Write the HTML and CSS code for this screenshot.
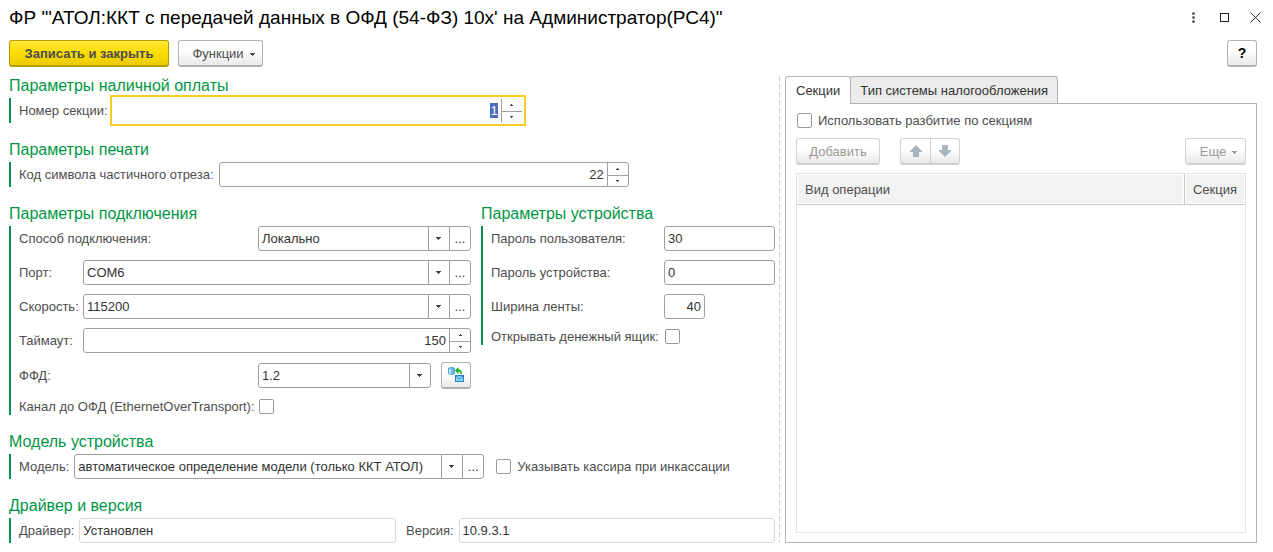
FILE: index.html
```html
<!DOCTYPE html>
<html lang="ru">
<head>
<meta charset="utf-8">
<title>ФР АТОЛ:ККТ</title>
<link rel="stylesheet" href="styles.css">
</head>
<body>
<svg class="defs" aria-hidden="true">
  <symbol id="down" viewBox="0 0 5 3"><path d="M0 0h5v1h-1v1h-1v1h-1v-1h-1v-1h-1z"/></symbol>
  <symbol id="up-s" viewBox="0 0 3 2"><path d="M1 0h1v1h1v1h-3v-1h1z"/></symbol>
  <symbol id="down-s" viewBox="0 0 3 2"><path d="M0 0h3v1h-1v1h-1v-1h-1z"/></symbol>
</svg>

<header class="titlebar">
  <h1 class="title">ФР "'АТОЛ:ККТ с передачей данных в ОФД (54-ФЗ) 10x' на Администратор(РС4)"</h1>
  <div class="window-actions">
    <button class="icon-button" aria-label="Меню"><svg width="13" height="13" viewBox="0 0 13 13"><g fill="#666"><circle cx="6.5" cy="2.5" r="1.5"/><circle cx="6.5" cy="6.5" r="1.5"/><circle cx="6.5" cy="10.5" r="1.5"/></g></svg></button>
    <button class="icon-button" aria-label="Развернуть"><svg width="13" height="13" viewBox="0 0 13 13"><rect x="2.5" y="2.5" width="8" height="8" fill="none" stroke="#222"/></svg></button>
    <button class="icon-button" aria-label="Закрыть"><svg width="13" height="13" viewBox="0 0 13 13"><path d="M1.5 1.5l10 10M11.5 1.5l-10 10" stroke="#333" fill="none"/></svg></button>
  </div>
</header>

<div class="toolbar">
  <button class="button button-primary">Записать и закрыть</button>
  <button class="button button-menu">Функции <svg class="arrow"><use href="#down"/></svg></button>
  <button class="button button-help">?</button>
</div>

<main class="workspace">
  <form class="form">
    <section class="group">
      <h2 class="group-title">Параметры наличной оплаты</h2>
      <div class="group-body">
        <div class="row">
          <label class="label" for="section">Номер секции:</label>
          <div class="field field-wide field-focused">
            <input class="input number" id="section" value="1">
            <div class="spin">
              <button type="button" class="spin-button" aria-label="Больше"><svg class="arrow-small"><use href="#up-s"/></svg></button>
              <button type="button" class="spin-button" aria-label="Меньше"><svg class="arrow-small"><use href="#down-s"/></svg></button>
            </div>
          </div>
        </div>
      </div>
    </section>

    <section class="group">
      <h2 class="group-title">Параметры печати</h2>
      <div class="group-body">
        <div class="row">
          <label class="label" for="cut">Код символа частичного отреза:</label>
          <div class="field field-wide">
            <input class="input number" id="cut" value="22">
            <div class="spin">
              <button type="button" class="spin-button" aria-label="Больше"><svg class="arrow-small"><use href="#up-s"/></svg></button>
              <button type="button" class="spin-button" aria-label="Меньше"><svg class="arrow-small"><use href="#down-s"/></svg></button>
            </div>
          </div>
        </div>
      </div>
    </section>

    <div class="pair">
      <section class="group">
        <h2 class="group-title">Параметры подключения</h2>
        <div class="group-body">
          <div class="row row-split">
            <label class="label" for="method">Способ подключения:</label>
            <div class="field">
              <div class="choice"><select class="select" id="method"><option>Локально</option></select><svg class="arrow"><use href="#down"/></svg></div>
              <button type="button" class="more" aria-label="Выбрать способ">...</button>
            </div>
          </div>
          <div class="row row-narrow">
            <label class="label" for="port">Порт:</label>
            <div class="field">
              <div class="choice"><select class="select" id="port"><option>COM6</option></select><svg class="arrow"><use href="#down"/></svg></div>
              <button type="button" class="more" aria-label="Выбрать порт">...</button>
            </div>
          </div>
          <div class="row row-narrow">
            <label class="label" for="speed">Скорость:</label>
            <div class="field">
              <div class="choice"><select class="select" id="speed"><option>115200</option></select><svg class="arrow"><use href="#down"/></svg></div>
              <button type="button" class="more" aria-label="Выбрать скорость">...</button>
            </div>
          </div>
          <div class="row row-narrow">
            <label class="label" for="timeout">Таймаут:</label>
            <div class="field">
              <input class="input number" id="timeout" value="150">
              <div class="spin">
                <button type="button" class="spin-button" aria-label="Больше"><svg class="arrow-small"><use href="#up-s"/></svg></button>
                <button type="button" class="spin-button" aria-label="Меньше"><svg class="arrow-small"><use href="#down-s"/></svg></button>
              </div>
            </div>
          </div>
          <div class="row row-split">
            <label class="label" for="ffd">ФФД:</label>
            <div class="field-set">
              <div class="field">
                <div class="choice"><select class="select" id="ffd"><option>1.2</option></select><svg class="arrow"><use href="#down"/></svg></div>
              </div>
              <button type="button" class="button button-icon" aria-label="Получить версию">
                <svg width="18" height="18" viewBox="0 0 18 18">
                  <path d="M1.500 2.500c0-1.300 6-1.300 6 0v5c0 1.300-6 1.300-6 0z" fill="#6bb8ec" stroke="#4a9fd6"/>
                  <path d="M2 3h2v5h-2z" fill="#c4e6fb"/>
                  <path d="M8 4.500l3.500-3.500v2.500c2.500 0 3.500 1.500 3.500 4.500h-1.500c0-2-.5-2.500-2-2.500v2.500z" fill="#12b012"/>
                  <rect x="8.500" y="9.500" width="8" height="6" fill="#8ed0fa" stroke="#2585c9"/>
                  <path d="M9 10l3.500 3 3.500-3" fill="none" stroke="#2585c9"/>
                </svg>
              </button>
            </div>
          </div>
          <div class="row row-split row-check">
            <label class="label" for="channel">Канал до ОФД (EthernetOverTransport):</label>
            <input type="checkbox" class="check" id="channel">
          </div>
        </div>
      </section>

      <section class="group">
        <h2 class="group-title">Параметры устройства</h2>
        <div class="group-body">
          <div class="row row-device">
            <label class="label" for="user-pass">Пароль пользователя:</label>
            <div class="field"><input class="input" id="user-pass" value="30"></div>
          </div>
          <div class="row row-device">
            <label class="label" for="dev-pass">Пароль устройства:</label>
            <div class="field"><input class="input" id="dev-pass" value="0"></div>
          </div>
          <div class="row row-device">
            <label class="label" for="tape">Ширина ленты:</label>
            <div class="field field-short"><input class="input number" id="tape" value="40"></div>
          </div>
          <div class="row row-device row-check">
            <label class="label" for="drawer">Открывать денежный ящик:</label>
            <input type="checkbox" class="check" id="drawer">
          </div>
        </div>
      </section>
    </div>

    <section class="group">
      <h2 class="group-title">Модель устройства</h2>
      <div class="group-body">
        <div class="row">
          <label class="label" for="model">Модель:</label>
          <div class="field field-wide">
            <div class="choice"><select class="select" id="model"><option>автоматическое определение модели (только ККТ АТОЛ)</option></select><svg class="arrow"><use href="#down"/></svg></div>
            <button type="button" class="more" aria-label="Выбрать модель">...</button>
          </div>
          <label class="check-label check-after"><input type="checkbox" class="check">Указывать кассира при инкассации</label>
        </div>
      </div>
    </section>

    <section class="group">
      <h2 class="group-title">Драйвер и версия</h2>
      <div class="group-body">
        <div class="row row-driver">
          <div class="row">
            <label class="label" for="driver">Драйвер:</label>
            <div class="field field-readonly"><input class="input" id="driver" value="Установлен" readonly></div>
          </div>
          <div class="row">
            <label class="label" for="version">Версия:</label>
            <div class="field field-readonly"><input class="input" id="version" value="10.9.3.1" readonly></div>
          </div>
        </div>
      </div>
    </section>
  </form>

  <div class="splitter"></div>

  <section class="panel">
    <div class="tabs" role="tablist">
      <button class="tab tab-active" role="tab" aria-selected="true">Секции</button>
      <button class="tab" role="tab" aria-selected="false">Тип системы налогообложения</button>
    </div>
    <div class="panel-body">
      <label class="check-label"><input type="checkbox" class="check">Использовать разбитие по секциям</label>
      <div class="commands">
        <button class="button button-add" disabled>Добавить</button>
        <div class="button-pair">
          <button class="button button-icon" disabled aria-label="Вверх"><svg width="12" height="12" viewBox="0 0 12 12"><path d="M6 0l6 6v1h-3v5h-6v-5h-3v-1z" fill="#a9b5bd"/></svg></button>
          <button class="button button-icon" disabled aria-label="Вниз"><svg width="12" height="12" viewBox="0 0 12 12"><path d="M6 12l6-6v-1h-3v-5h-6v5h-3v1z" fill="#a9b5bd"/></svg></button>
        </div>
        <button class="button button-more" disabled>Еще <svg class="arrow"><use href="#down"/></svg></button>
      </div>
      <div class="table-box">
        <table class="table">
          <thead><tr><th>Вид операции</th><th class="col-section">Секция</th></tr></thead>
          <tbody></tbody>
        </table>
      </div>
    </div>
  </section>
</main>
<script src="app.js"></script>
</body>
</html>
```
FILE: app.js
```js
const section = document.getElementById("section");
section.focus();
section.select();
```
FILE: styles.css
```css
* { box-sizing: border-box; }

body {
  margin: 0;
  background: #fff;
  color: #4d4d4d;
  font: 13px/15px "Liberation Sans", Arial, sans-serif;
}

button, input, select {
  margin: 0;
  font: inherit;
  color: inherit;
}

svg { display: block; flex: none; }
.defs { position: absolute; width: 0; height: 0; }
.arrow { width: 5px; height: 3px; fill: #444; }
.arrow-small { width: 3px; height: 2px; fill: #444; }

.titlebar {
  display: flex;
  align-items: center;
  justify-content: space-between;
  height: 35px;
  padding: 0 11px 0 9px;
}
.title {
  margin: 0;
  font-size: 19px;
  line-height: 21px;
  font-weight: normal;
  color: #000;
}
.window-actions { display: flex; gap: 18px; }
.icon-button {
  padding: 0;
  border: 0;
  background: none;
}

.toolbar {
  display: flex;
  gap: 9px;
  padding: 5px 16px 7px 9px;
}

.button {
  display: flex;
  align-items: center;
  justify-content: center;
  height: 27px;
  padding: 0 13px;
  border: 1px solid #b3b3b3;
  border-bottom: 2px solid #b0b0b0;
  border-radius: 3px;
  background: linear-gradient(#fff 40%, #e9e9e9);
  white-space: nowrap;
}
.button:disabled { color: #999; border-color: #d0d0d0; }
.button .arrow { margin-top: 2px; }
.button:disabled .arrow { fill: #999; }
.button-primary {
  width: 160px;
  padding: 0;
  font-weight: bold;
  border-color: #b39b00;
  background: linear-gradient(#ffe835, #fbdc00 50%, #eccb00);
}
.button-menu { width: 85px; gap: 6px; padding: 0 6px 0 12px; }
.button-help {
  width: 30px;
  margin-left: auto;
  padding: 0;
  color: #000;
  font-size: 14px;
  font-weight: bold;
}
.button-icon { width: 30px; padding: 0; }
.button-add { width: 84px; padding: 0; }
.button-more { width: 61px; gap: 6px; padding: 0 6px 0 12px; margin-left: auto; }

.workspace {
  display: grid;
  grid-template-columns: minmax(0, 766fr) 10px minmax(0, 472fr);
  padding: 0 16px 9px 9px;
}
.form {
  display: flex;
  flex-direction: column;
  gap: 15px;
}
.splitter {
  margin: 2px 0 0 4px;
  width: 1px;
  background: repeating-linear-gradient(#d0d0d0 0 5px, #fff 5px 8px);
}

.group-title {
  margin: 0;
  font-size: 16px;
  line-height: 24px;
  font-weight: normal;
  color: #009646;
}
.group-body {
  display: flex;
  flex-direction: column;
  gap: 9px;
  padding-left: 8px;
  border-left: 2px solid #009646;
}
.pair {
  display: grid;
  grid-template-columns: 462fr 294fr;
  align-items: start;
  gap: 10px;
}

.row {
  display: flex;
  align-items: center;
  gap: 5px;
  min-width: 0;
}
.row-split, .row-narrow, .row-device, .row-driver { display: grid; gap: 0; }
.row-split { grid-template-columns: 239px 1fr; }
.row-narrow { grid-template-columns: 64px 1fr; }
.row-device { grid-template-columns: 173px 1fr; }
.row-driver { grid-template-columns: 377fr 369fr; gap: 10px; }
.row-check { height: 17px; }
.label { white-space: nowrap; }

.field {
  display: flex;
  flex: 1;
  min-width: 0;
  height: 25px;
  border: 1px solid #a0a0a0;
  border-radius: 3px;
  background: #fff;
  color: #333;
  overflow: hidden;
}
.field-wide { flex: 0 1 410px; }
.field-short { width: 41px; }
.field-readonly { border-color: #d9d9d9; }
.field-focused {
  flex-basis: 416px;
  height: 31px;
  margin: -3px;
  padding: 2px;
  border: 2px solid #fc2;
  border-radius: 0;
}
.field-set { display: flex; align-items: center; gap: 10px; }

.input {
  flex: 1;
  width: 0;
  min-width: 0;
  padding: 0 3px;
  border: 0;
  outline: 0;
  background: none;
}
.input::selection { background: #4c6cc0; color: #fff; }
.number { text-align: right; }

.choice { display: grid; flex: 1; min-width: 0; }
.choice > * { grid-area: 1 / 1; }
.choice .arrow {
  justify-self: end;
  align-self: center;
  width: 21px;
  height: 23px;
  padding: 10px 8px 10px 7px;
  border-left: 1px solid #a0a0a0;
  pointer-events: none;
}
.select {
  width: 100%;
  min-width: 0;
  padding: 0 22px 0 3px;
  border: 0;
  outline: 0;
  appearance: none;
  background: none;
}
.more {
  width: 21px;
  padding: 0;
  border: 0;
  border-left: 1px solid #a0a0a0;
  background: none;
}
.spin {
  display: grid;
  grid-template-rows: 1fr 1fr;
  width: 21px;
  border-left: 1px solid #a0a0a0;
}
.spin-button {
  display: grid;
  place-items: center;
  padding: 0;
  border: 0;
  background: none;
}
.spin-button + .spin-button { border-top: 1px solid #a0a0a0; }

.check {
  appearance: none;
  flex: none;
  width: 15px;
  height: 15px;
  margin: 0 1px;
  border: 1px solid #999;
  border-radius: 2px;
  background: #fff;
}
.check:checked { background: #009646; }
.check-label {
  display: flex;
  align-items: center;
  gap: 5px;
  height: 17px;
  white-space: nowrap;
}
.check-after { margin-left: 6px; }

.panel {
  display: flex;
  flex-direction: column;
  min-width: 0;
  padding-top: 2px;
}
.tabs { display: flex; }
.tab {
  height: 27px;
  padding: 0 9px;
  border: 1px solid #b3b3b3;
  border-bottom: 0;
  border-radius: 3px 3px 0 0;
  background: #ebebeb;
  color: #333;
  white-space: nowrap;
}
.tab + .tab { margin-left: -1px; }
.tab-active {
  z-index: 1;
  height: 28px;
  margin-bottom: -1px;
  padding: 0 10px;
  background: #fff;
}
.panel-body {
  display: flex;
  flex: 1;
  flex-direction: column;
  padding: 8px 10px 9px;
  border: 1px solid #b3b3b3;
}
.commands {
  display: flex;
  gap: 20px;
  margin: 9px 0 8px;
}
.button-pair { display: flex; }
.button-pair .button:first-child { width: 31px; border-radius: 3px 0 0 3px; }
.button-pair .button:last-child { margin-left: -1px; border-radius: 0 3px 3px 0; }

.table-box {
  flex: 1;
  border: 1px solid #e3e3e3;
}
.table {
  width: 100%;
  border-collapse: separate;
  border-spacing: 0;
}
.table th {
  height: 31px;
  padding: 0 8px;
  border-bottom: 1px solid #c8c8c8;
  background: #f2f2f2;
  box-shadow: inset 0 0 0 1px #fff;
  font-weight: normal;
  text-align: left;
}
.table .col-section { width: 61px; border-left: 1px solid #c8c8c8; }
```
